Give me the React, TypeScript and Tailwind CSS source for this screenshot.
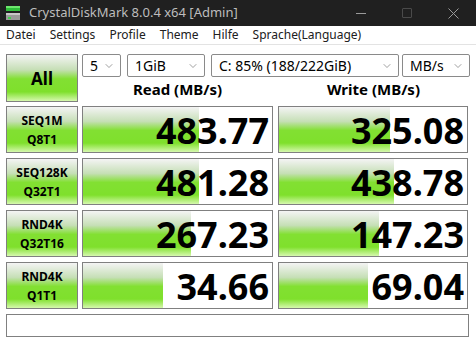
import { ChevronDown } from 'lucide-react'

type Result = {
  name: string
  queue: string
  read: string
  readFill: number
  write: string
  writeFill: number
}

const results: Result[] = [
  { name: 'SEQ1M', queue: 'Q8T1', read: '483.77', readFill: 116, write: '325.08', writeFill: 111 },
  { name: 'SEQ128K', queue: 'Q32T1', read: '481.28', readFill: 116, write: '438.78', writeFill: 115 },
  { name: 'RND4K', queue: 'Q32T16', read: '267.23', readFill: 108, write: '147.23', writeFill: 100 },
  { name: 'RND4K', queue: 'Q1T1', read: '34.66', readFill: 80, write: '69.04', writeFill: 89 },
]

const menu = ['Datei', 'Settings', 'Profile', 'Theme', 'Hilfe', 'Sprache(Language)']

const green =
  'bg-[linear-gradient(to_bottom,#f4f4f4_0%,#c6dfb6_32%,#82e032_52%,#7fe02c_80%,#d6f8ae_100%)]'

const AppIcon = () => (
  <svg width="16" height="16" viewBox="0 0 16 16">
    <rect x="1" y="1" width="14" height="5" fill="#2fbf3a" />
    <rect x="1" y="1" width="14" height="2" fill="#6ee86e" />
    <rect x="1" y="8" width="14" height="7" fill="#9a9a9a" />
    <rect x="1" y="8" width="14" height="2" fill="#c8c8c8" />
    <rect x="3" y="12" width="3" height="2" fill="#3fd04a" />
  </svg>
)

const Select = ({ value, width }: { value: string, width: string }) => (
  <div className={`${width} h-[23px] flex items-center justify-between border border-[#8a8a8a] rounded-[2px] bg-white pl-[7px] pr-[5px] text-[14px] text-black`}>
    <span>{value}</span>
    <ChevronDown size={12} strokeWidth={1.2} className="text-[#606060]" />
  </div>
)

const ScoreBox = ({ value, fill }: { value: string, fill: number }) => (
  <div className="relative h-[47px] border border-[#808080] bg-white">
    <div className={`absolute left-0 top-0 bottom-0 ${green}`} style={{ width: fill }} />
    <div className="relative h-full flex items-center justify-end pr-[3px] pt-[2px] text-[36px] font-bold leading-[40px] text-black">
      {value}
    </div>
  </div>
)

export default function App() {
  return (
    <div className="w-[476px] h-[342px] bg-white font-['Noto_Sans',sans-serif] overflow-hidden">
      {/* title bar */}
      <div className="h-[26px] bg-[#202020] flex items-center pl-[5px]">
        <AppIcon />
        <span className="ml-[8px] text-[13px] text-[#bdbdbd]">CrystalDiskMark 8.0.4 x64 [Admin]</span>
        <div className="ml-auto flex items-center h-full">
          <div className="w-[46px] h-full flex items-center justify-center">
            <div className="w-[10px] h-px bg-[#9a9a9a]" />
          </div>
          <div className="w-[46px] h-full flex items-center justify-center">
            <div className="w-[10px] h-[10px] border border-[#4a4a4a] rounded-[1px]" />
          </div>
          <div className="w-[46px] h-full flex items-center justify-center">
            <svg width="11" height="11" viewBox="0 0 11 11">
              <path d="M0.5 0.5 L10.5 10.5 M10.5 0.5 L0.5 10.5" stroke="#9a9a9a" strokeWidth="1" />
            </svg>
          </div>
        </div>
      </div>

      {/* menu */}
      <div className="h-[19px] flex items-center gap-[14px] pl-[6px] text-[12px] text-[#202020] border-b border-[#e3e3e3]">
        {menu.map(m => <span key={m}>{m}</span>)}
      </div>

      <div className="pl-[6px] pt-[9px]">
        {/* controls */}
        <div className="flex">
          <div className={`w-[72px] h-[48px] border border-[#808080] ${green} flex items-center justify-center pt-[2px] text-[17px] font-bold text-black`}>
            All
          </div>
          <div className="ml-[4px] flex flex-col">
            <div className="flex">
              <Select value="5" width="w-[39px]" />
              <div className="ml-[6px]"><Select value="1GiB" width="w-[78px]" /></div>
              <div className="ml-[6px]"><Select value="C: 85% (188/222GiB)" width="w-[188px]" /></div>
              <div className="ml-[3px]"><Select value="MB/s" width="w-[68px]" /></div>
            </div>
            <div className="flex h-[25px] items-center text-[15px] font-bold text-black">
              <div className="w-[191px] text-center">Read (MB/s)</div>
              <div className="ml-[5px] w-[191px] text-center">Write (MB/s)</div>
            </div>
          </div>
        </div>

        {/* results */}
        <div className="mt-[4px] grid grid-cols-[72px_191px_191px] gap-x-[4px] gap-y-[5px]">
          {results.map((r, i) => (
            <div key={i} className="contents">
              <div className={`h-[47px] border border-[#808080] ${green} flex flex-col items-center justify-center pt-[1px] text-[12px] font-bold leading-[19px] text-black`}>
                <span>{r.name}</span>
                <span>{r.queue}</span>
              </div>
              <ScoreBox value={r.read} fill={r.readFill} />
              <div className="ml-[1px]">
                <ScoreBox value={r.write} fill={r.writeFill} />
              </div>
            </div>
          ))}
        </div>

        {/* status */}
        <div className="mt-[5px] w-[463px] h-[23px] border border-[#808080] bg-white" />
      </div>
    </div>
  )
}
